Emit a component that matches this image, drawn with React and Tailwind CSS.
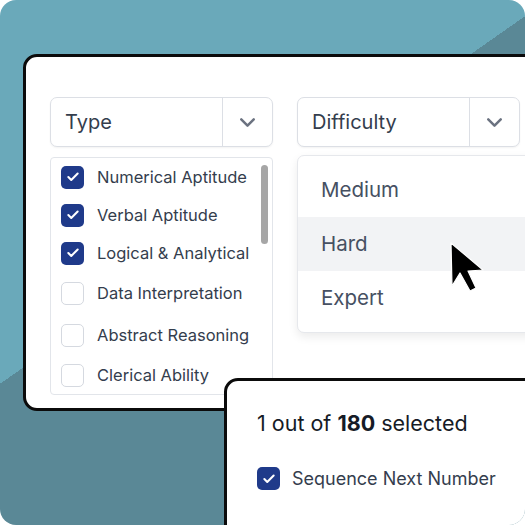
import { Check, ChevronDown } from 'lucide-react'

const types = [
  { label: 'Numerical Aptitude', checked: true, h: 'h-[38px]' },
  { label: 'Verbal Aptitude', checked: true, h: 'h-[38px]' },
  { label: 'Logical & Analytical', checked: true, h: 'h-[38px]' },
  { label: 'Data Interpretation', checked: false, h: 'h-[42px]' },
  { label: 'Abstract Reasoning', checked: false, h: 'h-[42px]' },
  { label: 'Clerical Ability', checked: false, h: 'h-[39px]' },
]

function Box({ checked }) {
  if (checked) {
    return (
      <div className="flex h-[23px] w-[23px] shrink-0 items-center justify-center rounded-[5px] bg-[#1f3a8a]">
        <Check className="h-[14px] w-[14px] text-white" strokeWidth={3.5} />
      </div>
    )
  }
  return <div className="h-[23px] w-[23px] shrink-0 rounded-[5px] border-[1.5px] border-[#d5d9e0] bg-white" />
}

function Select({ label }) {
  return (
    <div className="flex h-[50px] w-[223px] rounded-[7px] border border-[#dcdfe5] bg-white shadow-[0_1px_2px_rgba(0,0,0,0.05)]">
      <div className="flex flex-1 items-center pl-[14px] text-[20px] text-[#343d4d]">{label}</div>
      <div className="flex w-[50px] items-center justify-center border-l border-[#dcdfe5]">
        <ChevronDown className="h-[25px] w-[25px] text-[#6b7280]" strokeWidth={2.4} />
      </div>
    </div>
  )
}

export default function App() {
  return (
    <div className="h-[525px] w-[525px] bg-white font-['Inter',sans-serif]">
      <div className="relative h-[525px] w-[525px] overflow-hidden rounded-[16px] bg-[linear-gradient(145deg,#6aa9ba_43%,#5a8896_43%)] pl-[23px] pt-[54px]">
        <div className="h-[357px] w-[560px] rounded-[14px] border-[3px] border-[#0b0b0b] bg-white pl-[24px] pt-[40px]">
          <div className="flex gap-[24px]">
            <Select label="Type" />
            <Select label="Difficulty" />
          </div>
          <div className="mt-[10px] flex h-[238px] w-[223px] rounded-[4px] border border-[#e2e5ea]">
            <ul className="flex-1">
              {types.map((t) => (
                <li key={t.label} className={`flex ${t.h} items-center gap-[13px] pl-[10px] text-[16.5px] text-[#343d4d]`}>
                  <Box checked={t.checked} />
                  <span>{t.label}</span>
                </li>
              ))}
            </ul>
            <div className="pr-[4px] pt-[7px]">
              <div className="h-[79px] w-[7px] rounded-full bg-[#a6a6a6]" />
            </div>
          </div>
        </div>

        {/* difficulty dropdown */}
        <div className="absolute left-[297px] top-[155px] w-[260px] rounded-[7px] border border-[#e6e8ec] bg-white py-[7px] text-[20.5px] text-[#465062] shadow-[0_4px_10px_rgba(0,0,0,0.08)]">
          <div className="flex h-[54px] items-center pl-[23px]">Medium</div>
          <div className="flex h-[54px] items-center bg-[#f2f3f5] pl-[23px]">Hard</div>
          <div className="flex h-[54px] items-center pl-[23px]">Expert</div>
        </div>

        {/* cursor */}
        <svg className="absolute left-[449px] top-[241px]" width="36" height="52" viewBox="-2 -2 36 52">
          <polygon
            points="0,0 1,43 9,30 19,48 25,45 17,28 32,27"
            fill="#000"
            stroke="#fff"
            strokeWidth="1.2"
            strokeLinejoin="round"
          />
        </svg>

        {/* selection summary */}
        <div className="absolute left-[224px] top-[378px] h-[170px] w-[330px] rounded-tl-[14px] border-[3px] border-[#0b0b0b] bg-white pl-[30px] pt-[26px]">
          <div className="text-[21.5px] text-[#161b26]">
            1 out of <span className="font-bold">180</span> selected
          </div>
          <div className="mt-[26px] flex items-center gap-[12px] text-[18px] text-[#343d4d]">
            <Box checked />
            <span>Sequence Next Number</span>
          </div>
        </div>
      </div>
    </div>
  )
}
